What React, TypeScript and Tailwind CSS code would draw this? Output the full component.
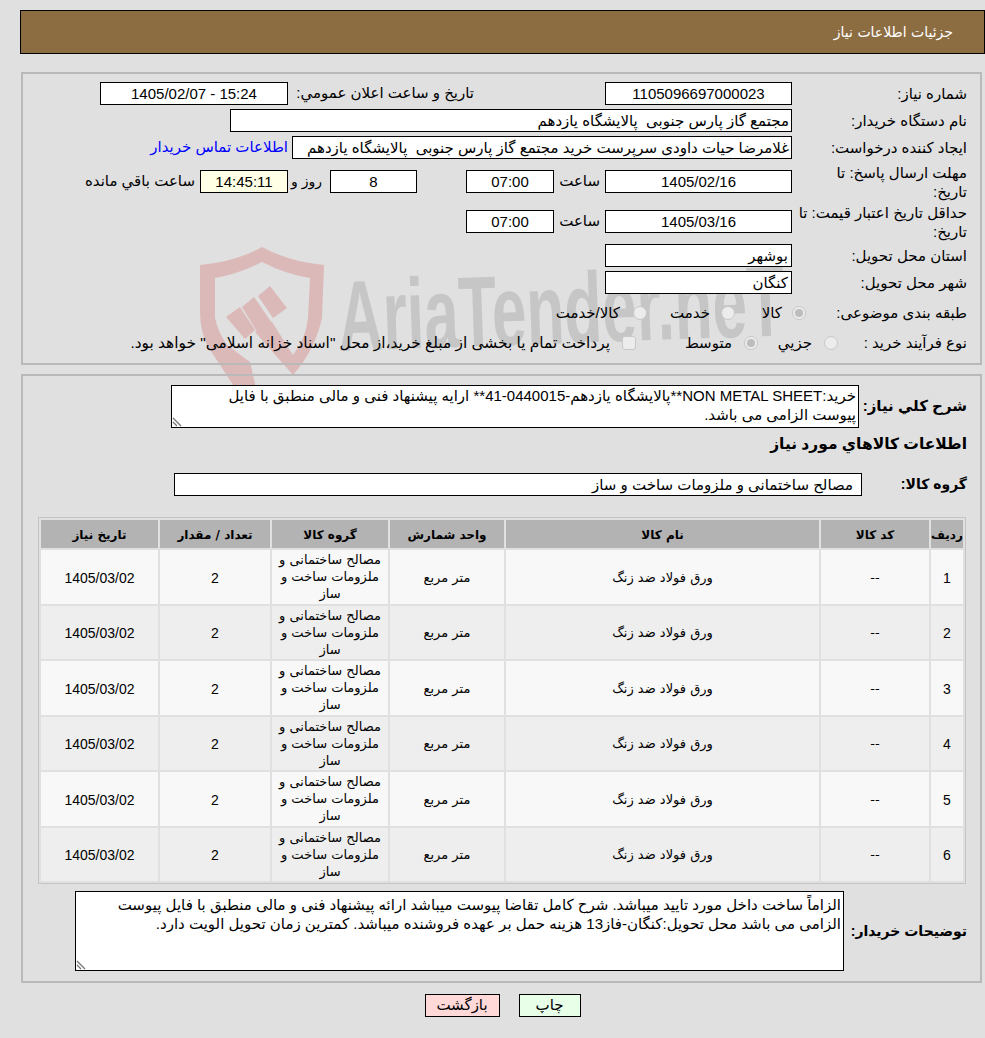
import React from 'react';

const rows = [1, 2, 3, 4, 5, 6];

function Field({ className = '', bg = 'bg-white', children }: { className?: string; bg?: string; children?: React.ReactNode }) {
  return (
    <div className={`h-[23px] shrink-0 border border-black leading-[21px] whitespace-nowrap overflow-hidden ${bg} ${className}`}>
      {children}
    </div>
  );
}

function Label({ children }: { children: React.ReactNode }) {
  return <div className="w-[188px] shrink-0 pr-[13px] whitespace-nowrap leading-[19px]">{children}</div>;
}

function Radio({ checked = false }: { checked?: boolean }) {
  return (
    <span className="flex h-[14px] w-[14px] shrink-0 items-center justify-center rounded-full border border-[#c8c8c8] bg-[#ececec]">
      {checked && <span className="h-[8px] w-[8px] rounded-full bg-[#bdbdbd]" />}
    </span>
  );
}

function Grip() {
  return (
    <svg className="absolute bottom-0 left-0" width="12" height="12" viewBox="0 0 12 12">
      <path d="M1 3 L9 11 M1 7 L5 11" stroke="#777" strokeWidth="1.3" fill="none" />
    </svg>
  );
}

export default function App() {
  return (
    <div dir="rtl" className="relative h-[1038px] w-[985px] overflow-hidden bg-[#e0e0e0] pt-[10px] text-[15px] text-black font-['Liberation_Sans','DejaVu_Sans',sans-serif]">
      {/* watermark sits behind the form */}
      <div className="absolute left-0 top-0 z-0 h-[400px] w-[985px]" dir="ltr">
        <svg className="absolute left-[190px] top-[240px]" width="150" height="160" viewBox="190 240 150 160">
          <path
            fill="#dcb9b9"
            d="M200 265 Q235 262 262 247 Q290 262 324 265 L322 318 Q315 350 293 375 L255 332 L272 322 L293 355 Q306 338 308 318 L310 278 Q285 274 262 262 Q238 274 215 278 L215 318 Q218 332 227 345 L250 362 L257 392 L233 385 L207 345 Q200 330 200 312 Z"
          />
          <path fill="#dcb9b9" d="M226 317 L240 307 L255 330 L245 339 Z M242 307 L254 297 L272 323 L257 332 Z M258 296 L270 286 L287 308 L273 318 Z" />
        </svg>
        <div className="absolute left-[338px] top-[266px] origin-left -rotate-2 scale-x-[0.62] whitespace-nowrap text-[100px] font-bold leading-[100px] text-[#c6c6c6]">
          AriaTender.neT
        </div>
      </div>

      <div className="relative z-10">
        {/* title bar */}
        <div className="ml-[20px] flex h-[44px] items-center border border-black bg-[#8c6d42] pr-[31px] text-[14px] text-white font-['DejaVu_Sans',sans-serif]">
          جزئیات اطلاعات نیاز
        </div>

        {/* main info */}
        <div className="mr-[3px] mt-[18px] h-[293px] w-[961px] border-2 border-[#b9b9b9] pt-[8px]">
          <div className="flex h-[23px] items-center">
            <Label>شماره نیاز:</Label>
            <Field className="w-[187px] text-center">1105096697000023</Field>
            <div className="w-[317px] shrink-0 pr-[131px] whitespace-nowrap">تاریخ و ساعت اعلان عمومي:</div>
            <Field className="w-[188px] text-center">
              <span dir="ltr">1405/02/07 - 15:24</span>
            </Field>
          </div>
          <div className="mt-[4px] flex h-[23px] items-center">
            <Label>نام دستگاه خریدار:</Label>
            <Field className="w-[562px] pr-[2px]">مجتمع گاز پارس جنوبی&nbsp; پالایشگاه یازدهم</Field>
          </div>
          <div className="mt-[4px] flex h-[23px] items-center">
            <Label>ایجاد کننده درخواست:</Label>
            <Field className="w-[500px] pr-[2px]">غلامرضا حیات داودی سرپرست خرید مجتمع گاز پارس جنوبی&nbsp; پالایشگاه یازدهم</Field>
            <span className="mr-[4px] whitespace-nowrap text-[#0000ff]">اطلاعات تماس خریدار</span>
          </div>
          <div className="mt-[6px] flex h-[33px] items-center">
            <Label>
              مهلت ارسال پاسخ: تا
              <br />
              تاریخ:
            </Label>
            <Field className="w-[187px] text-center">1405/02/16</Field>
            <div className="w-[51px] shrink-0 pr-[5px]">ساعت</div>
            <Field className="w-[88px] text-center">07:00</Field>
            <div className="w-[49px] shrink-0" />
            <Field className="w-[87px] text-center">8</Field>
            <div className="w-[42px] shrink-0 pr-[8px] text-[14px] whitespace-nowrap">روز و</div>
            <Field bg="bg-[#ffffe6]" className="w-[88px] text-center">14:45:11</Field>
            <div className="mr-[5px] whitespace-nowrap">ساعت باقي مانده</div>
          </div>
          <div className="mt-[7px] flex h-[33px] items-center">
            <Label>
              حداقل تاریخ اعتبار قیمت: تا
              <br />
              تاریخ:
            </Label>
            <Field className="w-[187px] text-center">1405/03/16</Field>
            <div className="w-[51px] shrink-0 pr-[5px]">ساعت</div>
            <Field className="w-[88px] text-center">07:00</Field>
          </div>
          <div className="mt-[6px] flex h-[23px] items-center">
            <Label>استان محل تحویل:</Label>
            <Field className="w-[187px] pr-[3px]">بوشهر</Field>
          </div>
          <div className="mt-[4px] flex h-[23px] items-center">
            <Label>شهر محل تحویل:</Label>
            <Field className="w-[187px] pr-[3px]">کنگان</Field>
          </div>
          <div className="mt-[9px] flex h-[20px] items-center whitespace-nowrap">
            <div className="w-[170px] shrink-0 pr-[13px]">طبقه بندی موضوعی:</div>
            <div className="mr-[4px]"><Radio checked /></div>
            <div className="w-[57px] shrink-0 pr-[10px]">کالا</div>
            <Radio />
            <div className="w-[74px] shrink-0 pr-[11px]">خدمت</div>
            <Radio />
            <div className="pr-[13px]">کالا/خدمت</div>
          </div>
          <div className="mt-[10px] flex h-[20px] items-center whitespace-nowrap">
            <div className="w-[142px] shrink-0 pr-[13px]">نوع فرآیند خرید :</div>
            <Radio />
            <div className="w-[66px] shrink-0 pr-[12px]">جزيي</div>
            <Radio checked />
            <div className="w-[108px] shrink-0 pr-[12px]">متوسط</div>
            <span className="h-[14px] w-[14px] shrink-0 rounded-[3px] border border-[#c8c8c8] bg-[#ececec]" />
            <div className="pr-[12px] text-[15.4px]">پرداخت تمام یا بخشی از مبلغ خرید،از محل "اسناد خزانه اسلامی" خواهد بود.</div>
          </div>
        </div>

        {/* items */}
        <div className="mr-[3px] mt-[9px] h-[609px] w-[961px] border-2 border-[#b9b9b9]">
          <div className="mt-[9px] flex items-center">
            <div className="w-[121px] shrink-0 pr-[13px] text-[15px] font-bold whitespace-nowrap">شرح کلي نیاز:</div>
            <div className="relative h-[43px] w-[688px] shrink-0 border border-black bg-white px-[2px] leading-[19px]">
              خرید:NON METAL SHEET**پالایشگاه یازدهم-0440015-41** ارایه پیشنهاد فنی و مالی منطبق با فایل
              <br />
              پیوست الزامی می باشد.
              <Grip />
            </div>
          </div>
          <div className="mt-[7px] h-[18px] pr-[13px] text-[15.5px] font-bold leading-[18px]">اطلاعات کالاهاي مورد نیاز</div>
          <div className="mt-[20px] flex items-center">
            <div className="w-[118px] shrink-0 pr-[13px] text-[14px] font-bold">گروه کالا:</div>
            <Field className="w-[688px] pr-[8px]">مصالح ساختمانی و ملزومات ساخت و ساز</Field>
          </div>

          <table className="mr-[14px] mt-[21px] w-[928px] table-fixed border-separate border-spacing-[2px] border border-[#c4c4c4] text-center text-[13px] font-['DejaVu_Sans',sans-serif]">
            <colgroup>
              <col className="w-[32px]" />
              <col className="w-[108px]" />
              <col className="w-[313px]" />
              <col className="w-[114px]" />
              <col className="w-[116px]" />
              <col className="w-[110px]" />
              <col className="w-[117px]" />
            </colgroup>
            <thead>
              <tr className="h-[28px] bg-[#b3b3b3] text-[12px] font-bold">
                <th className="p-0 pt-[1px]">ردیف</th>
                <th className="p-0 pt-[1px]">کد کالا</th>
                <th className="p-0 pt-[1px]">نام کالا</th>
                <th className="p-0 pt-[1px]">واحد شمارش</th>
                <th className="p-0 pt-[1px]">گروه کالا</th>
                <th className="p-0 pt-[1px]">تعداد / مقدار</th>
                <th className="p-0 pt-[1px]">تاریخ نیاز</th>
              </tr>
            </thead>
            <tbody>
              {rows.map((n) => (
                <tr key={n} className={`h-[53.5px] ${n % 2 === 1 ? 'bg-[#f8f8f8]' : 'bg-[#eeeeee]'}`}>
                  <td className="p-0 pt-[3px] text-[14px] font-['Liberation_Sans',sans-serif]">{n}</td>
                  <td className="p-0 pt-[1px]">--</td>
                  <td className="p-0 pt-[1px]">ورق فولاد ضد زنگ</td>
                  <td className="p-0 pt-[1px]">متر مربع</td>
                  <td className="p-0 leading-[17px]">مصالح ساختمانی و ملزومات ساخت و ساز</td>
                  <td className="p-0 pt-[3px] text-[14px] font-['Liberation_Sans',sans-serif]">2</td>
                  <td className="p-0 pt-[3px] text-[14px] font-['Liberation_Sans',sans-serif]">1405/03/02</td>
                </tr>
              ))}
            </tbody>
          </table>

          <div className="mt-[7px] flex items-center">
            <div className="w-[136px] shrink-0 pr-[13px] text-[14px] font-bold whitespace-nowrap">توضیحات خریدار:</div>
            <div className="relative h-[80px] w-[769px] shrink-0 border border-black bg-white px-[2px] pt-[3px] leading-[19px]">
              الزاماً ساخت داخل مورد تایید میباشد. شرح کامل تقاضا پیوست میباشد ارائه پیشنهاد فنی و مالی منطبق با فایل پیوست الزامی می باشد محل تحویل:کنگان-فاز13 هزینه حمل بر عهده فروشنده میباشد. کمترین زمان تحویل الویت دارد.
              <Grip />
            </div>
          </div>
        </div>

        {/* actions */}
        <div className="mt-[11px] flex justify-center gap-[19px] pl-[20px]">
          <div className="flex h-[23px] w-[62px] items-center justify-center border border-black bg-[#e8ffe8]">چاپ</div>
          <div className="flex h-[23px] w-[75px] items-center justify-center border border-black bg-[#ffd8d8]">بازگشت</div>
        </div>
      </div>
    </div>
  );
}
